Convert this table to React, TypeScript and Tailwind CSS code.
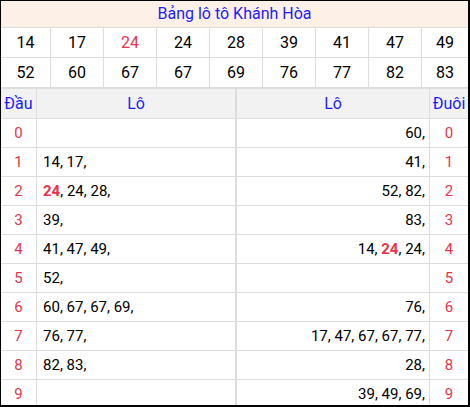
const top1 = ["14", "17", "24", "24", "28", "39", "41", "47", "49"];
const top2 = ["52", "60", "67", "67", "69", "76", "77", "82", "83"];

type Part = { v: string; hot?: boolean };

const dau: Part[][] = [
    [],
    [{ v: "14" }, { v: "17" }],
    [{ v: "24", hot: true }, { v: "24" }, { v: "28" }],
    [{ v: "39" }],
    [{ v: "41" }, { v: "47" }, { v: "49" }],
    [{ v: "52" }],
    [{ v: "60" }, { v: "67" }, { v: "67" }, { v: "69" }],
    [{ v: "76" }, { v: "77" }],
    [{ v: "82" }, { v: "83" }],
    [],
];

const duoi: Part[][] = [
    [{ v: "60" }],
    [{ v: "41" }],
    [{ v: "52" }, { v: "82" }],
    [{ v: "83" }],
    [{ v: "14" }, { v: "24", hot: true }, { v: "24" }],
    [],
    [{ v: "76" }],
    [{ v: "17" }, { v: "47" }, { v: "67" }, { v: "67" }, { v: "77" }],
    [{ v: "28" }],
    [{ v: "39" }, { v: "49" }, { v: "69" }],
];

const Lo = ({ parts }: { parts: Part[] }) => (
    <span className="whitespace-pre">
        {parts.map((p, i) => (
            <span key={i}>
                {p.hot ? (
                    <b className="font-bold text-[#e8334a]">{p.v}</b>
                ) : (
                    p.v
                )}
                {i < parts.length - 1 ? ", " : ","}
            </span>
        ))}
    </span>
);

export default function App() {
    return (
        <div className="w-[470px] h-[407px] overflow-hidden bg-white border-t border-l border-r-2 border-b-2 border-black font-['Roboto',sans-serif] text-[15px] text-black">
            {/* Title */}
            <div className="h-[27px] bg-[#fdf1e7] border-b border-[#dddddd] flex items-center justify-center text-[16px] text-[#1c1cff]">
                Bảng lô tô Khánh Hòa
            </div>

            {/* Numbers */}
            {[top1, top2].map((row, r) => (
                <div
                    key={r}
                    className="h-[30px] grid grid-cols-[50px_repeat(7,53px)_1fr] border-b border-[#dddddd]"
                >
                    {row.map((n, i) => (
                        <div
                            key={i}
                            className={`flex items-center justify-center text-[16px] ${
                                i < 8 ? "border-r border-[#dddddd]" : ""
                            } ${r === 0 && i === 2 ? "text-[#e8334a]" : ""}`}
                        >
                            {n}
                        </div>
                    ))}
                </div>
            ))}

            {/* Đầu / Đuôi */}
            <div className="flex border-t border-[#dddddd]">
                <div className="w-[235px] border-r border-[#dddddd]">
                    <div className="h-[30px] flex bg-[#f2f2f2] border-b border-[#dddddd] text-[#1c1cff] text-[16px]">
                        <div className="w-[36px] border-r border-[#dddddd] flex items-center justify-center">
                            Đầu
                        </div>
                        <div className="flex-1 flex items-center justify-center">
                            Lô
                        </div>
                    </div>
                    {dau.map((parts, i) => (
                        <div
                            key={i}
                            className="h-[29px] flex border-b border-[#dddddd]"
                        >
                            <div className="w-[36px] border-r border-[#dddddd] flex items-center justify-center text-[#e8334a]">
                                {i}
                            </div>
                            <div className="flex-1 flex items-center pl-[6px]">
                                <Lo parts={parts} />
                            </div>
                        </div>
                    ))}
                </div>
                <div className="flex-1 border-l border-[#dddddd]">
                    <div className="h-[30px] flex bg-[#f2f2f2] border-b border-[#dddddd] text-[#1c1cff] text-[16px]">
                        <div className="flex-1 border-r border-[#dddddd] flex items-center justify-center">
                            Lô
                        </div>
                        <div className="w-[38px] flex items-center justify-center">
                            Đuôi
                        </div>
                    </div>
                    {duoi.map((parts, i) => (
                        <div
                            key={i}
                            className="h-[29px] flex border-b border-[#dddddd]"
                        >
                            <div className="flex-1 border-r border-[#dddddd] flex items-center justify-end pr-[4px]">
                                <Lo parts={parts} />
                            </div>
                            <div className="w-[38px] flex items-center justify-center text-[#e8334a]">
                                {i}
                            </div>
                        </div>
                    ))}
                </div>
            </div>
        </div>
    );
}
